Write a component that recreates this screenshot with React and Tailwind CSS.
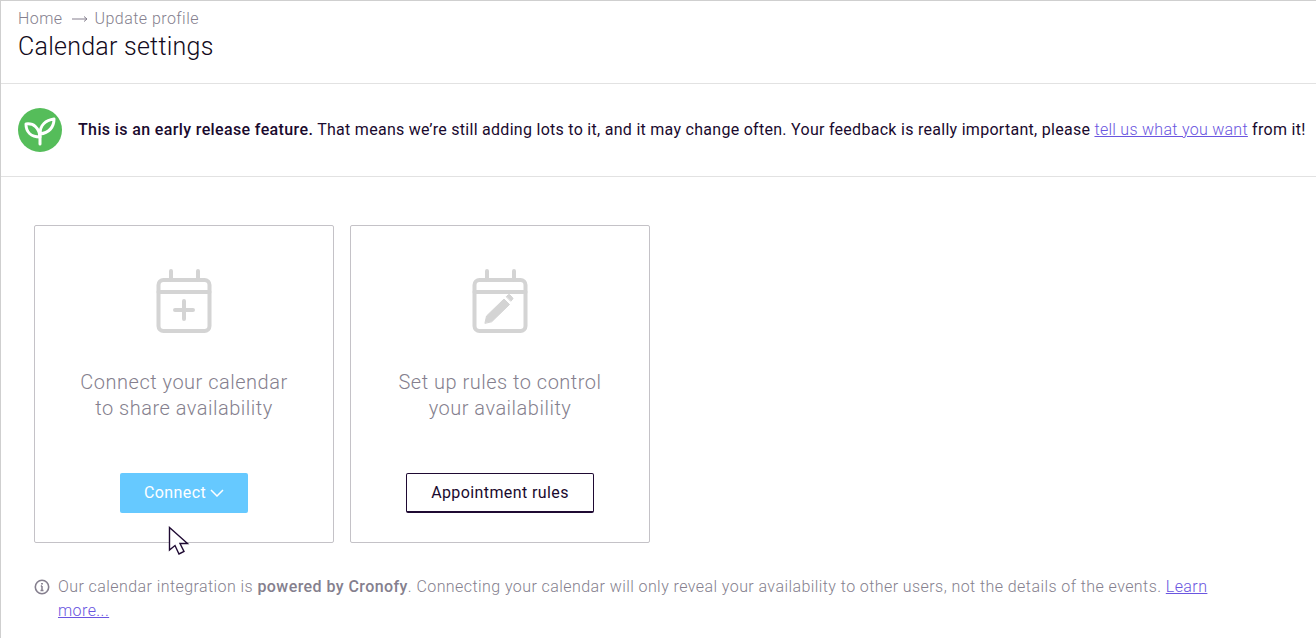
import React from 'react';

const font = "font-['Roboto',sans-serif]";

function CalendarBase({ children }) {
	return (
		<svg width="58" height="64" viewBox="0 0 58 64" fill="none" stroke="#d4d4d4" strokeWidth="4" strokeLinecap="round" strokeLinejoin="round">
			<rect x="3.500" y="11" width="51" height="51" rx="5" />
			<path d="M3.500 23h51M16 2v9M43 2v9" />
			{children}
		</svg>
	);
}

function Card({ icon, line1, line2, children }) {
	return (
		<div className="w-[300px] h-[318px] border border-[#c4c2c7] rounded-[2px] flex flex-col items-center pt-[43px]">
			{icon}
			<p className="mt-[36px] text-[20px] leading-[26px] tracking-[0.5px] text-[#857f8e] text-center font-light">
				{line1}
				<br />
				{line2}
			</p>
			<div className="mt-[52px]">{children}</div>
		</div>
	);
}

function Cursor() {
	return (
		<svg className="absolute left-[167px] top-[525px]" width="22" height="30" viewBox="0 0 22 30">
			<path d="M1.500 1.500V24l5.500-4.500L11 28l5-2.500-4-8h7.500z" fill="#fff" stroke="#1f0a33" strokeWidth="1.400" strokeLinejoin="miter" />
		</svg>
	);
}

export default function App() {
	return (
		<main className={`relative w-[1316px] h-[638px] overflow-hidden bg-white border-l border-t border-[#cfcfcf] text-[#1a0a2e] ${font}`}>
			<header className="h-[83px] px-[17px] pt-[8px] border-b border-[#e2e2e2]">
				<div className="flex items-center text-[16px] leading-[20px] tracking-[0.45px] text-[#857f8e] font-light">
					<span>Home</span>
					<span className="ml-[9px] mr-[7px]">
						<svg width="16" height="8" viewBox="0 0 16 8" fill="none" stroke="#857f8e" strokeWidth="1">
							<path d="M0 4h15M12 1.500L15 4l-3 2.500" />
						</svg>
					</span>
					<span>Update profile</span>
				</div>
				<h1 className="mt-[2px] text-[25px] leading-[32px] tracking-[0.25px] font-light text-[#120a20]">Calendar settings</h1>
			</header>

			<section className="h-[93px] px-[17px] flex items-center border-b border-[#e2e2e2]">
				<div className="w-[44px] h-[44px] rounded-full bg-[#55bd5a] shrink-0">
					<svg width="44" height="44" viewBox="0 0 44 44" fill="none" stroke="#fff" strokeWidth="3" strokeLinecap="round" strokeLinejoin="round">
						<path d="M22 36V24" />
						<path d="M22 29C13 29 8 24 8 16C16 15 21 20 22 29z" />
						<path d="M22 26C22 17 28 12 36 11C36 19 31 25 22 26z" />
					</svg>
				</div>
				<p className="ml-[16px] text-[16px] leading-[24px] whitespace-nowrap tracking-[0.28px]">
					<strong className="font-medium tracking-[0.37px]">This is an early release feature.</strong> That means we’re still adding lots to it, and it may change often. Your feedback is really important, please{' '}
					<a className="text-[#6a55e0] underline font-light" href="#">tell us what you want</a> from it!
				</p>
			</section>

			<section className="pl-[33px] pt-[48px] flex gap-[16px]">
				<Card
					line1="Connect your calendar"
					line2="to share availability"
					icon={
						<CalendarBase>
							<path d="M29 32v18M20 41h18" />
						</CalendarBase>
					}
				>
					<button className="w-[128px] h-[40px] bg-[#66c9ff] rounded-[2px] text-white text-[16px] tracking-[0.4px] flex items-center justify-center gap-[4px]">
						Connect
						<svg width="14" height="8" viewBox="0 0 14 8" fill="none" stroke="#fff" strokeWidth="1.500">
							<path d="M1 1l6 6 6-6" />
						</svg>
					</button>
				</Card>
				<Card
					line1="Set up rules to control"
					line2="your availability"
					icon={
						<CalendarBase>
							<path d="M14 54l1.500-7L33 30l5.500 5.500L21 52.500z" fill="#d4d4d4" stroke="#d4d4d4" strokeWidth="1" />
							<path d="M35.500 27.500l1.500-1.500q1-1 2 0l2.500 2.500q1 1 0 2l-1.500 1.500z" fill="#d4d4d4" stroke="#d4d4d4" strokeWidth="1" />
						</CalendarBase>
					}
				>
					<button className="w-[188px] h-[40px] border border-[#1f0a33] border-b-2 rounded-[2px] text-[16px] tracking-[0.4px]">
						Appointment rules
					</button>
				</Card>
			</section>

			<footer className="flex pl-[33px] pr-[104px] mt-[32px] text-[16px] leading-[24px] tracking-[0.425px] text-[#857f8e] font-light">
				<svg className="mt-[4px] shrink-0" width="16" height="16" viewBox="0 0 16 16" fill="none" stroke="#857f8e" strokeWidth="1.600">
					<circle cx="8" cy="8" r="6.700" />
					<path d="M8 7v4.500M6.500 11.500h3M6.800 7H8" strokeWidth="1.500" />
					<path d="M8 4v1.500" strokeWidth="1.800" />
				</svg>
				<p className="ml-[8px]">
					Our calendar integration is <strong className="font-medium">powered by Cronofy</strong>. Connecting your calendar will only reveal your availability to other users, not the details of the events.{' '}
					<a className="text-[#6a55e0] underline" href="#">Learn more...</a>
				</p>
			</footer>

			<Cursor />
		</main>
	);
}
